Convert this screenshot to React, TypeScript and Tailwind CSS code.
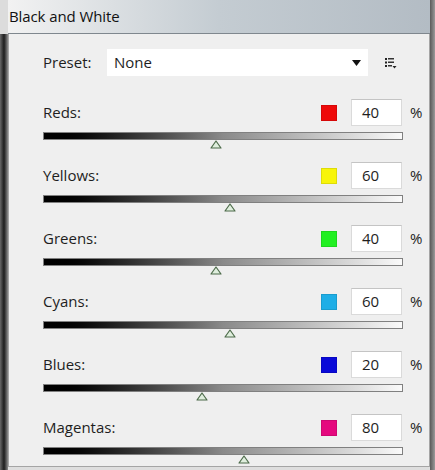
import React from 'react';

interface ChannelRow {
  name: string;
  value: number;
  swatch: string;
}

const channels: ChannelRow[] = [
  { name: 'Reds', value: 40, swatch: 'bg-[#ee0a0a]' },
  { name: 'Yellows', value: 60, swatch: 'bg-[#f8f50a]' },
  { name: 'Greens', value: 40, swatch: 'bg-[#22f022]' },
  { name: 'Cyans', value: 60, swatch: 'bg-[#1eaee6]' },
  { name: 'Blues', value: 20, swatch: 'bg-[#0a0ad8]' },
  { name: 'Magentas', value: 80, swatch: 'bg-[#e5087e]' },
];

// Photoshop B&W sliders run from -200 to 300
const toPct = (v: number) => ((v + 200) / 500) * 100;

function Thumb() {
  return (
    <svg width="12" height="9" viewBox="0 0 12 9" className="block">
      <path d="M6 1 L11 8 L1 8 Z" fill="#dfeedd" stroke="#4d6b4a" strokeWidth="1.2" strokeLinejoin="round" />
    </svg>
  );
}

function PresetMenuIcon() {
  return (
    <svg width="12" height="11" viewBox="0 0 12 11" className="block">
      <rect x="0" y="0" width="2" height="2" fill="#222" />
      <rect x="3" y="0" width="6" height="1.5" fill="#333" />
      <rect x="0" y="3.5" width="2" height="2" fill="#222" />
      <rect x="3" y="3.5" width="6" height="1.5" fill="#333" />
      <rect x="0" y="7" width="2" height="2" fill="#222" />
      <rect x="3" y="7" width="4" height="1.5" fill="#333" />
      <path d="M7.5 8 L11.5 8 L9.5 10.5 Z" fill="#222" />
    </svg>
  );
}

function Channel({ row }: { row: ChannelRow }) {
  return (
    <div className="h-[63px]">
      <div className="flex items-center w-[380px] h-[27px]">
        <span className="flex-1 text-[15px] text-[#1e1e1e]">{row.name}:</span>
        <div className={`w-[16px] h-[16px] ${row.swatch} border border-black/10`} />
        <div className="ml-[14px] w-[51px] h-[27px] bg-white border border-[#dadada] border-t-[#c4c4c4] flex items-center pl-[10px] text-[15px] text-[#1e1e1e]">
          {row.value}
        </div>
        <span className="ml-[8px] w-[13px] text-[15px] text-[#1e1e1e]">%</span>
      </div>
      <div className="relative mt-[6px] w-[360px] h-[8px] border border-[#808080] bg-gradient-to-r from-[#000000] via-[#8a8a8a] to-[#fafafa]">
        <div className="absolute top-[7px] -translate-x-1/2" style={{ left: `${toPct(row.value)}%` }}>
          <Thumb />
        </div>
      </div>
    </div>
  );
}

export default function App() {
  return (
    <div className="w-[435px] h-[470px] flex bg-[#d9d9d9] overflow-hidden" style={{ fontFamily: '"Open Sans", "Noto Sans", sans-serif' }}>
      {/* left edge of the photo behind */}
      <div className="w-[8px] flex flex-col">
        <div className="h-[34px] bg-[#dcdcdc]" />
        <div className="flex-1 bg-gradient-to-r from-[#6a6a6a] via-[#1e1e1e] to-[#8e8e8e]" />
      </div>

      <div className="flex-1 flex flex-col">
        {/* title bar */}
        <div className="h-[34px] flex items-center pl-[1px] border-b border-[#7f878e] bg-gradient-to-r from-[#f2f2f2] via-[#c4ccd2] to-[#b3bcc4]">
          <span className="text-[15px] text-[#111] tracking-[-0.1px]">Black and White</span>
        </div>

        {/* panel body */}
        <div className="h-[433px] border border-t-0 border-[#a5a5a5] bg-[#efefef] pl-[34px] pt-[15px]">
          <div className="flex items-center h-[27px]">
            <span className="w-[64px] text-[15px] text-[#1e1e1e]">Preset:</span>
            <div className="w-[261px] h-[27px] bg-white flex items-center pl-[7px] pr-[7px]">
              <span className="flex-1 text-[15px] text-[#1e1e1e]">None</span>
              <svg width="9" height="6" viewBox="0 0 9 6">
                <path d="M0 0 L9 0 L4.5 6 Z" fill="#111" />
              </svg>
            </div>
            <div className="ml-[17px] pt-[2px]">
              <PresetMenuIcon />
            </div>
          </div>

          <div className="mt-[23px]">
            {channels.map((c) => (
              <Channel key={c.name} row={c} />
            ))}
          </div>
        </div>
        <div className="flex-1 bg-[#dedede]" />
      </div>

      {/* right edge */}
      <div className="w-[5px] bg-gradient-to-r from-[#5a5a5a] to-[#9a9a9a]" />
    </div>
  );
}
